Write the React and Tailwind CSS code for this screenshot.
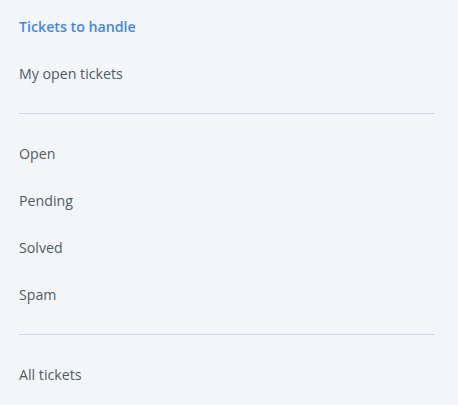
export default function App() {
  const groups = [
    ["Open", "Pending", "Solved", "Spam"],
  ];

  return (
    <div
      className="min-h-[405px] w-[458px] bg-[#f3f6f9] pt-[3px] pl-[19px] pr-[23px] text-[14.2px] text-[#505a67]"
      style={{ fontFamily: '"Open Sans", "Noto Sans", sans-serif' }}
    >
      <div className="flex h-[47px] items-center font-semibold text-[#3f86f5]">Tickets to handle</div>
      <div className="flex h-[47px] items-center">My open tickets</div>
      <div className="my-4 h-px bg-[#cfd6e2]" />
      {groups[0].map((label) => (
        <div key={label} className="flex h-[47px] items-center">
          {label}
        </div>
      ))}
      <div className="my-4 h-px bg-[#cfd6e2]" />
      <div className="flex h-[47px] items-center">All tickets</div>
    </div>
  );
}
